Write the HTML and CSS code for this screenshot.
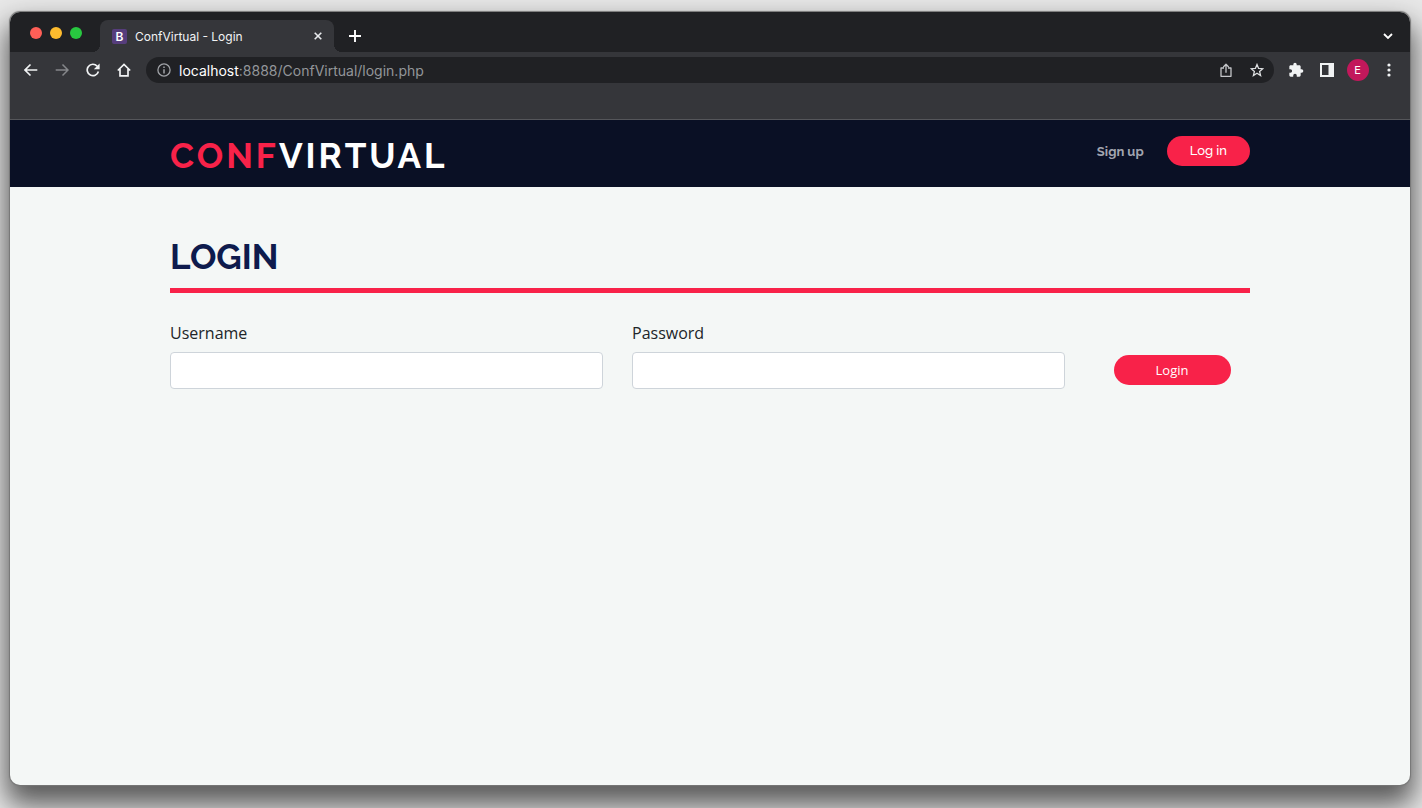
FILE: index.html
```html
<!DOCTYPE html>
<html lang="en">
<head>
<meta charset="utf-8">
<meta name="viewport" content="width=device-width, initial-scale=1">
<title>ConfVirtual - Login</title>
<link rel="stylesheet" href="styles.css">
</head>
<body>
<div class="window">
  <div class="tab-strip">
    <div class="lights">
      <button class="light light-close" aria-label="Close window"></button>
      <button class="light light-min" aria-label="Minimize window"></button>
      <button class="light light-max" aria-label="Maximize window"></button>
    </div>
    <div class="tab">
      <span class="favicon">B</span>
      <span class="tab-title">ConfVirtual - Login</span>
      <button class="icon-btn tab-close" aria-label="Close tab">
        <svg width="8" height="8" viewBox="0 0 8 8"><path d="M.7.7l6.600 6.600M7.300.7L.7 7.300" stroke="#e8eaed" stroke-width="1.600"/></svg>
      </button>
    </div>
    <button class="icon-btn tab-new" aria-label="New tab">
      <svg width="12" height="12" viewBox="0 0 12 12"><path d="M6 0v12M0 6h12" stroke="#fff" stroke-width="1.900"/></svg>
    </button>
    <button class="icon-btn tab-search" aria-label="Search tabs">
      <svg width="10" height="7" viewBox="0 0 10 7"><path d="M1 1l4 4 4-4" fill="none" stroke="#fff" stroke-width="1.800"/></svg>
    </button>
  </div>

  <div class="toolbar">
    <div class="nav-buttons">
      <button class="icon-btn" aria-label="Back">
        <svg width="14" height="14" viewBox="0 0 14 14"><path d="M13.300 7H1.400M6.500 1.500L1 7l5.500 5.500" fill="none" stroke="#f1f3f4" stroke-width="1.600"/></svg>
      </button>
      <button class="icon-btn" aria-label="Forward">
        <svg width="14" height="14" viewBox="0 0 14 14"><path d="M.7 7h11.900M7.500 1.500L13 7l-5.500 5.500" fill="none" stroke="#85878a" stroke-width="1.500"/></svg>
      </button>
      <button class="icon-btn" aria-label="Reload">
        <svg width="14" height="14" viewBox="0 0 14 14"><path d="M12.400 8.500A5.700 5.700 0 1 1 11.200 3.200" fill="none" stroke="#f1f3f4" stroke-width="1.700"/><path d="M13.600.4v5.800H7.800z" fill="#f1f3f4"/></svg>
      </button>
      <button class="icon-btn" aria-label="Home">
        <svg width="14" height="14" viewBox="0 0 14 14"><path d="M.8 7.500L7 1.400l6.200 6.100M3 6v6.800h8V6" fill="none" stroke="#f1f3f4" stroke-width="1.700"/></svg>
      </button>
    </div>
    <div class="address">
      <svg width="14" height="14" viewBox="0 0 14 14"><circle cx="7" cy="7" r="6.100" fill="none" stroke="#a0a3a7" stroke-width="1.300"/><path d="M7 6.200v4.300M7 3.400v1.600" stroke="#a0a3a7" stroke-width="1.500"/></svg>
      <span class="url"><span class="host">localhost</span>:8888/ConfVirtual/login.php</span>
      <button class="icon-btn" aria-label="Share">
        <svg width="12" height="15" viewBox="0 0 12 15"><path d="M4 5H1v8.300h10V5H8M6 9.800V1.600M3.300 4L6 1.300 8.700 4" fill="none" stroke="#c4c6c9" stroke-width="1.300" stroke-linejoin="round"/></svg>
      </button>
      <button class="icon-btn" aria-label="Bookmark">
        <svg width="14" height="14" viewBox="0 0 14 14"><path d="M7 1.500l1.600 3.900 4.200.3-3.200 2.700 1 4.100L7 10.300l-3.600 2.200 1-4.100L1.200 5.700l4.200-.3z" fill="none" stroke="#dcdee0" stroke-width="1.300"/></svg>
      </button>
    </div>
    <div class="actions">
      <button class="icon-btn" aria-label="Extensions">
        <svg width="16" height="16" viewBox="0 0 24 24"><path d="M20.500 11H19V7c0-1.100-.9-2-2-2h-4V3.500a2.500 2.500 0 0 0-5 0V5H4c-1.100 0-2 .9-2 2v3.800h1.500a2.700 2.700 0 0 1 0 5.400H2V20c0 1.100.9 2 2 2h3.800v-1.500a2.700 2.700 0 0 1 5.400 0V22H17c1.100 0 2-.9 2-2v-4h1.500a2.500 2.500 0 0 0 0-5z" fill="#f1f3f4"/></svg>
      </button>
      <button class="icon-btn" aria-label="Side panel">
        <svg width="14" height="14" viewBox="0 0 14 14"><path fill-rule="evenodd" d="M0 0h14v14H0zM2 2v10h6.500V2z" fill="#f1f3f4"/></svg>
      </button>
      <button class="icon-btn" aria-label="Profile"><span class="avatar">E</span></button>
      <button class="icon-btn" aria-label="Menu">
        <svg width="4" height="14" viewBox="0 0 4 14"><g fill="#f1f3f4"><circle cx="2" cy="2" r="1.600"/><circle cx="2" cy="7" r="1.600"/><circle cx="2" cy="12" r="1.600"/></g></svg>
      </button>
    </div>
  </div>

  <header class="site-header">
    <div class="container header-row">
      <a class="logo" href="#"><span class="logo-accent">CONF</span>VIRTUAL</a>
      <nav class="site-nav">
        <a class="nav-link" href="#">Sign up</a>
        <a class="pill nav-pill" href="#">Log in</a>
      </nav>
    </div>
  </header>

  <main class="page">
    <div class="container">
      <h1 class="page-title">LOGIN</h1>
      <form class="login-form">
        <div class="field">
          <label for="username">Username</label>
          <input id="username" type="text">
        </div>
        <div class="field">
          <label for="password">Password</label>
          <input id="password" type="password">
        </div>
        <button class="pill submit" type="submit">Login</button>
      </form>
    </div>
  </main>
</div>
</body>
</html>
```
FILE: styles.css
```css
* {
  box-sizing: border-box;
}

body {
  display: flex;
  min-height: 100vh;
  margin: 0;
  padding: 12px 12px 23px 10px;
  background: #e8e8e8;
  font-family: "Open Sans", sans-serif;
}

button {
  padding: 0;
  border: 0;
  background: none;
  font: inherit;
}

a {
  text-decoration: none;
}

svg {
  display: block;
}

.window {
  display: flex;
  flex: 1;
  flex-direction: column;
  min-width: 0;
  overflow: hidden;
  border-radius: 10px;
  background: #f4f7f6;
  box-shadow: 0 0 1px 1px #777, 0 16px 28px 4px rgba(0, 0, 0, 0.62);
}

.icon-btn {
  display: grid;
  flex: none;
  place-items: center;
}

/* Tab strip */
.tab-strip {
  display: flex;
  align-items: center;
  height: 40px;
  padding: 8px 17px 0 20px;
  background: #202124;
  font-family: Inter, sans-serif;
}

.lights {
  display: flex;
  align-self: flex-start;
  gap: 8px;
  margin: 7px 18px 0 0;
}

.light {
  width: 12px;
  height: 12px;
  border-radius: 50%;
}

.light-close {
  background: #ff5f57;
}

.light-min {
  background: #febc2e;
}

.light-max {
  background: #28c840;
}

.tab {
  position: relative;
  display: flex;
  align-items: center;
  gap: 8px;
  width: 234px;
  height: 32px;
  padding: 0 12px;
  border-radius: 8px 8px 0 0;
  background: #35363a;
  color: #f1f3f4;
  font-size: 12px;
}

.tab::before,
.tab::after {
  position: absolute;
  bottom: 0;
  width: 8px;
  height: 8px;
  content: "";
}

.tab::before {
  right: 100%;
  background: radial-gradient(circle at 0 0, transparent 8px, #35363a 8px);
}

.tab::after {
  left: 100%;
  background: radial-gradient(circle at 100% 0, transparent 8px, #35363a 8px);
}

.favicon {
  width: 15px;
  border-radius: 2px;
  background: #563d7c;
  color: #fff;
  font-size: 12px;
  font-weight: 600;
  line-height: 15px;
  text-align: center;
}

.tab-close {
  margin-left: auto;
}

.tab-new {
  margin-left: 15px;
}

.tab-search {
  margin-left: auto;
}

/* Toolbar */
.toolbar {
  display: flex;
  align-items: flex-start;
  height: 68px;
  padding: 5px 6px 0 14px;
  border-bottom: 1px solid #55565a;
  background: #35363a;
  font-family: Inter, sans-serif;
}

.nav-buttons,
.actions {
  display: flex;
  align-items: center;
  height: 26px;
}

.nav-buttons {
  gap: 17px;
  margin-right: 15px;
}

.address {
  display: flex;
  flex: 1;
  align-items: center;
  gap: 18px;
  height: 26px;
  padding: 0 10px 0 11px;
  border-radius: 13px;
  background: #202124;
  color: #93969a;
}

.url {
  flex: 1;
  margin-left: -10px;
  font-size: 14px;
}

.host {
  color: #fff;
}

.actions {
  margin-left: 6px;
}

.actions .icon-btn {
  width: 31px;
}

.avatar {
  width: 22px;
  border-radius: 50%;
  background: #c2185b;
  color: #fff;
  font-size: 11px;
  line-height: 22px;
  text-align: center;
}

/* Site */
.container {
  width: 100%;
  max-width: 1110px;
  margin: 0 auto;
  padding: 0 15px;
}

.site-header {
  padding: 16px 0 11px;
  background: #0a1025;
}

.header-row {
  display: flex;
  align-items: flex-start;
  justify-content: space-between;
}

.logo {
  color: #fff;
  font-family: Raleway, Lato, sans-serif;
  font-size: 35px;
  font-weight: 700;
  letter-spacing: 3px;
  line-height: 40px;
}

.logo-accent {
  color: #f82249;
}

.site-nav {
  display: flex;
  align-items: center;
  gap: 23px;
  font-family: Raleway, Inter, sans-serif;
  font-size: 13px;
}

.nav-link {
  color: #a2a5b0;
  font-weight: 700;
}

.pill {
  height: 30px;
  border-radius: 15px;
  background: #f82249;
  color: #fff;
  font-size: 13px;
  line-height: 30px;
  text-align: center;
}

.nav-pill {
  padding: 0 23px;
  font-weight: 500;
}

.page {
  flex: 1;
  padding: 48px 0;
}

.page-title {
  margin: 0;
  padding-bottom: 10px;
  border-bottom: 5px solid #f82249;
  color: #0e1b4d;
  font-family: Raleway, Lato, sans-serif;
  font-size: 35px;
  font-weight: 700;
  line-height: 43px;
}

.login-form {
  display: grid;
  grid-template-columns: 433fr 433fr 156fr;
  gap: 29px;
  align-items: end;
  margin-top: 28px;
}

.field {
  display: flex;
  flex-direction: column;
  gap: 7px;
}

.field label {
  color: #212529;
  font-size: 16px;
  line-height: 24px;
}

.field input {
  width: 100%;
  height: 37px;
  padding: 6px 12px;
  border: 1px solid #ced4da;
  border-radius: 4px;
  background: #fff;
  font: inherit;
}

.submit {
  justify-self: center;
  width: 75%;
  margin-bottom: 4px;
}
```
